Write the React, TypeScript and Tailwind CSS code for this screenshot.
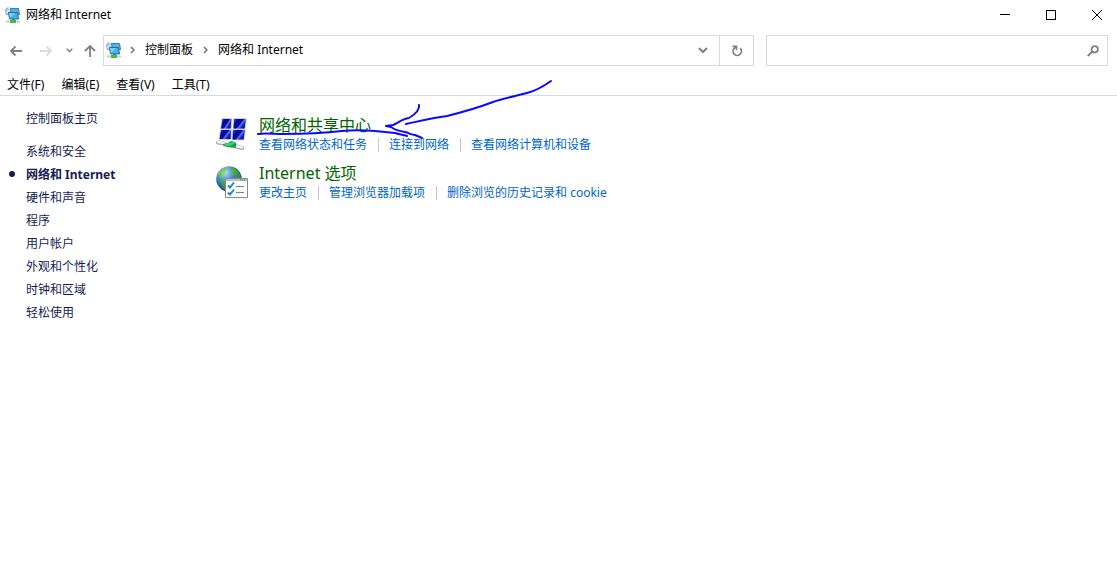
import { useState } from 'react';

const MENUS = ['文件(F)', '编辑(E)', '查看(V)', '工具(T)'];

const CATEGORIES = ['系统和安全', '网络和 Internet', '硬件和声音', '程序', '用户帐户', '外观和个性化', '时钟和区域', '轻松使用'];

const GROUPS = [
  {
    title: '网络和共享中心',
    icon: <SharingIcon />,
    links: ['查看网络状态和任务', '连接到网络', '查看网络计算机和设备'],
  },
  {
    title: 'Internet 选项',
    icon: <InternetOptionsIcon />,
    links: ['更改主页', '管理浏览器加载项', '删除浏览的历史记录和 cookie'],
  },
];

function NetworkIcon() {
  return (
    <svg width="16" height="16" viewBox="0 0 16 16" className="shrink-0">
      <circle cx="4.500" cy="4.500" r="4.300" fill="#a5cfe3" />
      <path d="M1 3.500Q3 .8 6 1M1.500 7Q2.500 3.500 6 2.500" stroke="#e8f6fb" fill="none" />
      <path d="M.5 4Q1 1.500 3 .7M.8 6l1.400 2" stroke="#5d9dbd" fill="none" />
      <path d="M5.500 1.500h8l1 6h-8z" fill="#4db4f0" stroke="#3c7ba6" />
      <path d="M3.500 5.500h9l1 6.500h-9z" fill="#45aef0" stroke="#2d6892" />
      <path d="M4 6h6l-5 5z" fill="#7cccfb" />
      <path d="M1 14.500h14" stroke="#c9d0cc" strokeWidth="2" />
      <path d="M5 14.500h6" stroke="#49bd49" strokeWidth="3" />
      <path d="M7 12.500h3" stroke="#32953a" />
    </svg>
  );
}

function SharingIcon() {
  return (
    <svg width="32" height="32" viewBox="0 0 32 32">
      <defs>
        <linearGradient id="screen" x1="0" y1="0.2" x2="1" y2="0.8">
          <stop offset="0" stopColor="#3a50c0" />
          <stop offset="0.25" stopColor="#0508a0" />
          <stop offset="0.5" stopColor="#0508a4" />
          <stop offset="0.6" stopColor="#5c7ae4" />
          <stop offset="0.75" stopColor="#1420c0" />
          <stop offset="1" stopColor="#040890" />
        </linearGradient>
      </defs>
      <g fill="url(#screen)" stroke="#dfe2ee" strokeWidth="0.800">
        <path d="M6 .5h10l-1 10.500H4.500z" />
        <path d="M17.500 .5h13l-1.500 10.500H17z" />
        <path d="M4.500 11.500h11l-.5 10H3z" />
        <path d="M16.500 11.500h13l-1.500 10.500H16z" />
      </g>
      <path d="M2 24.500l6 1M20 28.500l6 1.500" stroke="#a5aaa7" strokeWidth="4" strokeLinecap="round" />
      <path d="M2 24l6 1M20 28l6 1.500" stroke="#eef0ef" strokeWidth="2.500" strokeLinecap="round" />
      <path d="M7 26l5-1 3-2 4 1 1.500 2-1 4-8-1-4-1z" fill="#12a046" />
      <path d="M8 26l6-1 3-1 2 1-4 2.500-5 .5z" fill="#3bd67c" />
    </svg>
  );
}

function InternetOptionsIcon() {
  return (
    <svg width="32" height="32" viewBox="0 0 32 32">
      <defs>
        <radialGradient id="globe" cx="0.35" cy="0.25" r="0.75">
          <stop offset="0" stopColor="#b5e0f8" />
          <stop offset="0.5" stopColor="#3a83cb" />
          <stop offset="1" stopColor="#123a86" />
        </radialGradient>
        <radialGradient id="land" gradientUnits="userSpaceOnUse" cx="9" cy="7" r="18">
          <stop offset="0" stopColor="#a4dc8c" />
          <stop offset="0.5" stopColor="#4cab43" />
          <stop offset="1" stopColor="#1f7d34" />
        </radialGradient>
      </defs>
      <circle cx="13" cy="13" r="12.800" fill="url(#globe)" />
      <path d="M14 1l4 .5 4 4 3 5-2 3-2-1-2-4-3-1-2-2 1-2z" fill="url(#land)" />
      <path d="M3 6l3-3 4-1.500 1 2-2 2 1 2-3 2-1 2-3 0-1-2z" fill="url(#land)" />
      <path d="M4 15l4-1 3 2-1 5-1 3-3-3z" fill="url(#land)" />
      <path d="M9.500 12.500h22v19h-22z" fill="#f9fbfc" stroke="#858b91" />
      <path d="M10 13h21v2H10z" fill="#b9bfc9" />
      <path d="M24 14h1M26 14h1M28 14h1" stroke="#4c5467" />
      <path d="M12 19.500l2 2 4-5M12 26.500l2 2 4-5" stroke="#1789c6" strokeWidth="2" fill="none" />
      <path d="M20 20.500h8M20 26.500h8" stroke="#77838d" strokeWidth="1" />
    </svg>
  );
}

function Chevron({ down = false, small = false }: { down?: boolean; small?: boolean }) {
  if (down) {
    return (
      <svg width={small ? 7 : 10} height={small ? 5 : 7} viewBox="0 0 10 7" fill="none" stroke="#808080" strokeWidth="2">
        <path d="M1 1l4 4 4-4" />
      </svg>
    );
  }
  return (
    <svg width="5" height="8" viewBox="0 0 5 8" fill="none" stroke="#777" strokeWidth="1.500">
      <path d="M1 1l3 3-3 3" />
    </svg>
  );
}

function Arrow({ dir }: { dir: 'left' | 'right' | 'up' }) {
  return (
    <svg width="14" height="14" viewBox="0 0 14 14" fill="none" stroke={dir === 'right' ? '#dcdcdc' : '#808080'} strokeWidth="1.800">
      {dir === 'left' && <path d="M13 7H2M6.500 2.500L2 7l4.500 4.500" />}
      {dir === 'right' && <path d="M1 7h11M7.500 2.500L12 7l-4.500 4.500" />}
      {dir === 'up' && <path d="M7 13V2M2 7l5-5 5 5" />}
    </svg>
  );
}

// Hand-drawn pointer over the first group
function PenMarks() {
  return (
    <svg
      width="300"
      height="64"
      viewBox="255 78 300 64"
      className="pointer-events-none absolute left-[255px] -top-[18px]"
      fill="none"
      stroke="#0a0aff"
      strokeWidth="2"
      strokeLinecap="round"
      strokeLinejoin="round"
    >
      <path d="M551 81C544 86 535 91 527 93C516 96 505 98 493 102C480 107 467 111 447 116C432 118 420 121 406 124" />
      <path d="M419 105C420 111 414 115 409 118C402 119 398 123 393 125L386 126L391 127C395 130 398 131 405 132C410 133 408 134 415 135L422 138" />
      <path d="M258 134C265 133 273 134 284 134C303 134 325 133 342 131C352 130 363 130 375 131L395 133C401 135 404 135 407 136" />
    </svg>
  );
}

export default function App() {
  const [active, setActive] = useState('网络和 Internet');
  const [query, setQuery] = useState('');

  return (
    <div className="min-h-screen bg-white text-xs text-black font-['Noto_Sans','Noto_Sans_CJK_SC',sans-serif]">
      {/* Title bar */}
      <header className="flex h-[30px] items-center justify-between pl-[5px] pr-[15px]">
        <div className="flex items-center gap-[5px]">
          <NetworkIcon />
          <h1>网络和 Internet</h1>
        </div>
        <div className="flex items-center gap-9">
          <button aria-label="最小化">
            <svg width="10" height="10" stroke="#000" shapeRendering="crispEdges"><path d="M0 4.500h10" /></svg>
          </button>
          <button aria-label="最大化">
            <svg width="10" height="10" stroke="#000" fill="none" shapeRendering="crispEdges"><path d="M.5.5h9v9h-9z" /></svg>
          </button>
          <button aria-label="关闭">
            <svg width="10" height="10" stroke="#000"><path d="M0 0l10 10M10 0L0 10" /></svg>
          </button>
        </div>
      </header>

      {/* Address row */}
      <div className="flex items-center py-[5px] pl-[9px] pr-[9px]">
        <nav className="flex w-[94px] shrink-0 items-center">
          <button aria-label="后退"><Arrow dir="left" /></button>
          <button aria-label="前进" className="ml-4"><Arrow dir="right" /></button>
          <button aria-label="最近的位置" className="ml-[13px]"><Chevron down small /></button>
          <button aria-label="向上" className="ml-[10px]"><Arrow dir="up" /></button>
        </nav>
        <div className="flex h-[31px] flex-1 border border-[#d9d9d9]">
          <div className="flex flex-1 items-center pl-[2px] pb-px">
            <NetworkIcon />
            <span className="ml-2"><Chevron /></span>
            <a href="#panel" className="ml-[10px]">控制面板</a>
            <span className="ml-[10px]"><Chevron /></span>
            <a href="#network" className="ml-[10px]">网络和 Internet</a>
          </div>
          <button aria-label="以前的位置" className="flex w-8 items-center justify-center"><Chevron down /></button>
          <button aria-label="刷新" className="flex w-[34px] items-center justify-center border-l border-[#d9d9d9]">
            <svg width="12" height="12" viewBox="0 0 12 12" fill="none" stroke="#808080" strokeWidth="1.700">
              <path d="M9.200 3.200A4.200 4.200 0 1 1 2.900 3.600L5 1.800" />
              <path d="M1.500 1.300h4v4" />
            </svg>
          </button>
        </div>
        <div className="ml-3 flex h-[31px] w-[342px] items-center border border-[#d9d9d9] pr-2">
          <input
            aria-label="搜索控制面板"
            value={query}
            onChange={e => setQuery(e.target.value)}
            className="h-full min-w-0 flex-1 px-2 outline-none"
          />
          <svg width="12" height="12" viewBox="0 0 12 12" fill="none" stroke="#808080" strokeWidth="1.800">
            <circle cx="7.700" cy="4.300" r="3.200" />
            <path d="M5.200 6.600L.8 11" strokeWidth="2" />
          </svg>
        </div>
      </div>

      {/* Menu bar */}
      <div className="flex h-[25px] items-center gap-[17px] border-b border-[#d9d9d9] pl-[7px] pt-1">
        {MENUS.map(m => (
          <button key={m}>{m}</button>
        ))}
      </div>

      <main className="relative flex pt-[11px]">
        <aside className="w-[216px] shrink-0 pl-[26px] text-[#151c55]">
          <a href="#home" className="block leading-[23px]">控制面板主页</a>
          <ul className="mt-[10px]">
            {CATEGORIES.map(c => (
              <li key={c} className="relative leading-[23px]">
                {active === c && <span className="absolute -left-[17px] top-2 size-[6px] rounded-full bg-[#151c55]" />}
                <a href="#category" onClick={() => setActive(c)} className={active === c ? 'font-bold' : ''}>
                  {c}
                </a>
              </li>
            ))}
          </ul>
        </aside>

        <div className="flex flex-col gap-2 pt-2">
          {GROUPS.map(g => (
            <section key={g.title} className="flex h-10 gap-[11px]">
              <div className="w-8 shrink-0 pt-[3px]">{g.icon}</div>
              <div>
                <h2 className="text-base leading-5 text-[#006600]"><a href="#group">{g.title}</a></h2>
                <div className="flex items-center leading-5 text-[#0066cc]">
                  {g.links.map((l, i) => (
                    <div key={l} className="flex items-center">
                      {i > 0 && <span className="ml-[11px] mr-[10px] h-[14px] w-px bg-[#c8c8c8]" />}
                      <a href="#task">{l}</a>
                    </div>
                  ))}
                </div>
              </div>
            </section>
          ))}
        </div>

        <PenMarks />
      </main>
    </div>
  );
}
